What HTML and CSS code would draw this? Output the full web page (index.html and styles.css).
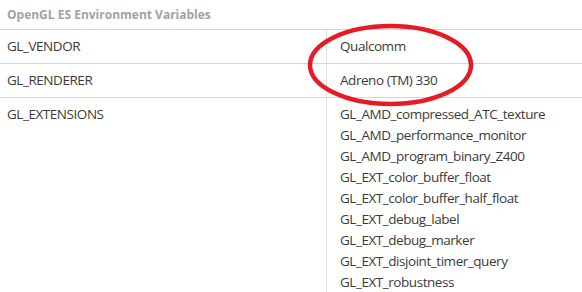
FILE: index.html
```html
<!DOCTYPE html>
<html>
<head>
<meta charset="utf-8">
<link rel="stylesheet" href="styles.css">
</head>
<body>
<div class="env">
  <div class="env-title">OpenGL ES Environment Variables</div>
  <div class="env-row">
    <div class="env-key">GL_VENDOR</div>
    <div class="env-val">Qualcomm</div>
  </div>
  <div class="env-row">
    <div class="env-key">GL_RENDERER</div>
    <div class="env-val">Adreno (TM) 330</div>
  </div>
  <div class="env-row">
    <div class="env-key">GL_EXTENSIONS</div>
    <div class="env-val">
      <div>GL_AMD_compressed_ATC_texture</div>
      <div>GL_AMD_performance_monitor</div>
      <div>GL_AMD_program_binary_Z400</div>
      <div>GL_EXT_color_buffer_float</div>
      <div>GL_EXT_color_buffer_half_float</div>
      <div>GL_EXT_debug_label</div>
      <div>GL_EXT_debug_marker</div>
      <div>GL_EXT_disjoint_timer_query</div>
      <div>GL_EXT_robustness</div>
    </div>
  </div>
  <svg class="mark" width="582" height="292" viewBox="0 0 582 292">
    <ellipse cx="390.5" cy="65" rx="80.5" ry="39" fill="none" stroke="#e61c24" stroke-width="4.5"/>
  </svg>
</div>
</body>
</html>
```
FILE: styles.css
```css
html, body {
  margin: 0;
  background: #fff;
}
body {
  width: 582px;
  height: 292px;
  overflow: hidden;
  font-family: "Open Sans", "Noto Sans", sans-serif;
  font-size: 13.5px;
  letter-spacing: -0.45px;
  line-height: 21px;
  color: #3b3b3b;
}
.env {
  position: relative;
}
.env-title {
  padding: 4px 7px;
  font-size: 12px;
  letter-spacing: 0;
  font-weight: 700;
  color: #a2a2a2;
  border-bottom: 1px solid #d6d6d6;
}
.env-row {
  display: grid;
  grid-template-columns: 326px 1fr;
  border-bottom: 1px solid #d6d6d6;
}
.env-key {
  padding: 6px 7px;
}
.env-val {
  padding: 6px 13px;
  border-left: 1px solid #e2e2e2;
}
.mark {
  position: absolute;
  left: 0;
  top: 0;
  pointer-events: none;
}
```
